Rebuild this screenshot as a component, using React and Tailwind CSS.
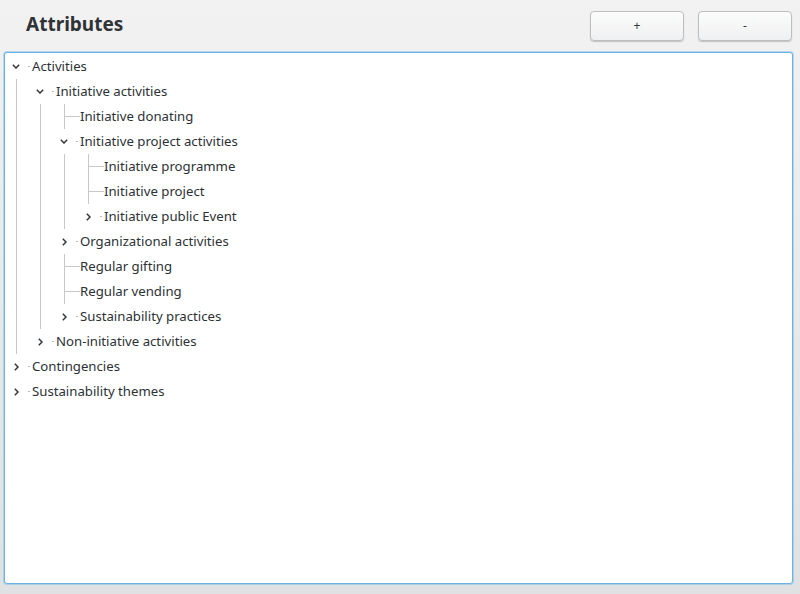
import React from "react";

const rows = [
  { label: "Activities", cells: ["down"] },
  { label: "Initiative activities", cells: ["v", "down"] },
  { label: "Initiative donating", cells: ["v", "v", "leaf"] },
  { label: "Initiative project activities", cells: ["v", "v", "down"] },
  { label: "Initiative programme", cells: ["v", "v", "v", "leaf"] },
  { label: "Initiative project", cells: ["v", "v", "v", "leaf"] },
  { label: "Initiative public Event", cells: ["v", "v", "v", "right"] },
  { label: "Organizational activities", cells: ["v", "v", "right"] },
  { label: "Regular gifting", cells: ["v", "v", "leaf"] },
  { label: "Regular vending", cells: ["v", "v", "leaf"] },
  { label: "Sustainability practices", cells: ["v", "v", "right"] },
  { label: "Non-initiative activities", cells: ["v", "right"] },
  { label: "Contingencies", cells: ["right"] },
  { label: "Sustainability themes", cells: ["right"] },
];

function ChevronDown() {
  return (
    <svg width="8" height="5" viewBox="0 0 8 5" className="block">
      <path d="M0.8 0.8 L4 4 L7.2 0.8" fill="none" stroke="#31363b" strokeWidth="1.5" />
    </svg>
  );
}

function ChevronRight() {
  return (
    <svg width="5" height="8" viewBox="0 0 5 8" className="block">
      <path d="M0.8 0.8 L4 4 L0.8 7.2" fill="none" stroke="#31363b" strokeWidth="1.5" />
    </svg>
  );
}

function Cell({ type, last }) {
  const w = last ? "w-[27px]" : "w-6";
  if (type === "v") {
    return (
      <div className={`${w} h-full flex shrink-0`}>
        <div className="w-[11px] shrink-0" />
        <div className="w-px h-full bg-[#c6c8ca]" />
      </div>
    );
  }
  if (type === "leaf") {
    return (
      <div className={`${w} h-full flex shrink-0`}>
        <div className="w-[11px] shrink-0" />
        <div className="w-px h-full bg-[#c6c8ca]" />
        <div className="flex-1 h-px self-center bg-[#c6c8ca]" />
      </div>
    );
  }
  if (type === "down") {
    return (
      <div className={`${w} h-full flex shrink-0 items-center`}>
        <div className="w-[8px] ml-[7px] shrink-0 flex flex-col items-center">
          <ChevronDown />
        </div>
        <div className="w-[2px] h-px bg-[#b8babc] ml-[8px]" />
      </div>
    );
  }
  return (
    <div className={`${w} h-full flex shrink-0 items-center`}>
      <div className="w-[5px] ml-[9px] shrink-0">
        <ChevronRight />
      </div>
      <div className="w-[2px] h-px bg-[#b8babc] ml-[9px]" />
    </div>
  );
}

function Row({ row }) {
  return (
    <div className="h-[25px] flex items-stretch">
      {row.cells.map((c, i) => (
        <Cell key={i} type={c} last={i === row.cells.length - 1} />
      ))}
      <div className="flex items-center text-[13.2px] text-[#2c3135] leading-none whitespace-nowrap">
        {row.label}
      </div>
    </div>
  );
}

function Btn({ children }) {
  return (
    <button className="w-[94px] h-[30px] rounded-[4px] border border-[#bcbebf] bg-gradient-to-b from-[#fcfcfc] to-[#eff0f1] shadow-[0_1px_1px_rgba(0,0,0,0.2)] text-[12px] text-[#31363b] flex items-center justify-center">
      {children}
    </button>
  );
}

export default function App() {
  return (
    <div
      className="w-[800px] h-[594px] flex flex-col bg-gradient-to-b from-[#f2f2f2] to-[#dfe1e2] overflow-hidden"
      style={{ fontFamily: '"Noto Sans", "Open Sans", sans-serif' }}
    >
      <div className="h-[52px] flex items-start shrink-0">
        <div className="pl-[26px] pt-[11px] text-[19px] font-bold text-[#2f3336] leading-[26px]">
          Attributes
        </div>
        <div className="ml-auto mt-[11px] mr-[8px] flex gap-[14px]">
          <Btn>+</Btn>
          <Btn>-</Btn>
        </div>
      </div>
      <div className="flex-1 ml-[4px] mr-[7px] mb-[10px] rounded-[3px] border border-[#6eb2e2] bg-white shadow-[0_0_0_1px_rgba(140,196,236,0.6)]">
        <div className="pt-px">
          {rows.map((r, i) => (
            <Row key={i} row={r} />
          ))}
        </div>
      </div>
    </div>
  );
}
